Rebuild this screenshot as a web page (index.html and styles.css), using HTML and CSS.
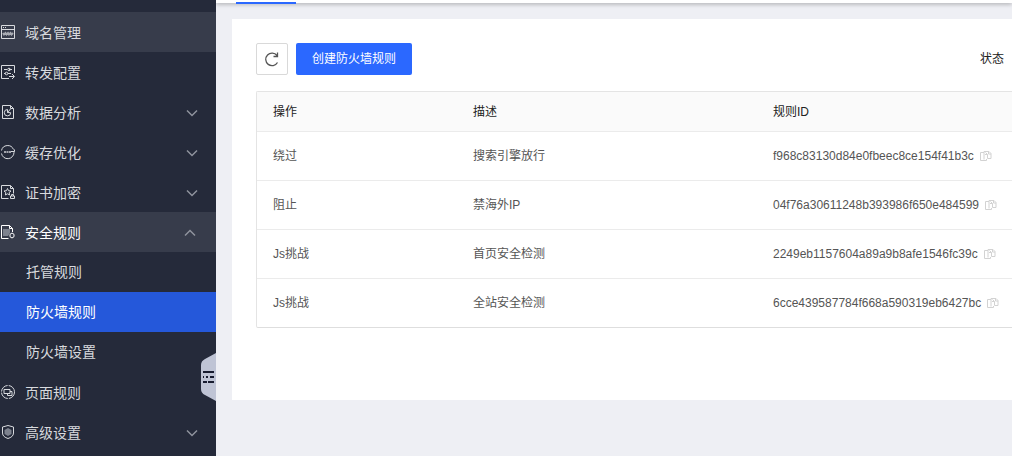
FILE: index.html
```html
<!DOCTYPE html>
<html lang="zh-CN">
<head>
  <meta charset="UTF-8">
  <meta name="viewport" content="width=device-width, initial-scale=1.0">
  <title>防火墙规则</title>
  <link rel="stylesheet" href="styles.css">
</head>
<body>
  <svg class="sprite" aria-hidden="true">
    <symbol id="arrow" viewBox="0 0 12 12"><path d="M1 3.500l5 5 5-5"/></symbol>
    <symbol id="copy" viewBox="0 0 12 12">
      <path d="M4 2.500H.500v8h6V9M4 9.500V1.500h5l2 2v5H7.500V4.500L5.500 2.500M8.500 1.500v2.500h2.500M5 4.500h2.500"/>
    </symbol>
  </svg>

  <div class="layout">
    <aside class="sidebar">
      <nav class="menu">
        <a href="#" class="menu-item highlight">
          <svg class="icon" viewBox="0 0 16 16"><path d="M1.500 1.500h13v13h-13zM1.500 5.500h13M3 3.500h1M5 3.500h1"/><path class="thick" d="M3 9l1 1.500L5.500 9l1 1.500L8 9l1 1.500L10.500 9l1 1.500L13 9"/></svg>
          <span>域名管理</span>
        </a>
        <a href="#" class="menu-item">
          <svg class="icon" viewBox="0 0 16 16"><path d="M14.500 9V1.500h-13v13H9M4 5.500h3M9 5.500h3M4 9.500h1.500M8 9.500h3M9 12.500h5M12 10l2.500 2.500L12 15"/><circle cx="9" cy="5.500" r="1.300"/><circle cx="6.500" cy="9.500" r="1.300"/></svg>
          <span>转发配置</span>
        </a>
        <a href="#" class="menu-item">
          <svg class="icon" viewBox="0 0 16 16"><path d="M2.500 1.500h8l3 3v10h-11zM10.500 1.500v3h3M7.500 8.500V5.500a3.200 3.200 0 1 0 3.200 3.200zM7.500 8.500l3-3.500"/></svg>
          <span>数据分析</span>
          <svg class="arrow"><use href="#arrow"/></svg>
        </a>
        <a href="#" class="menu-item">
          <svg class="icon" viewBox="0 0 16 16"><path d="M1.500 6.500a6.300 6.300 0 0 1 12-1M14 7.500v1A6.300 6.300 0 0 1 1.500 9.500M11 7.500h3.500v-2"/><path class="thick" d="M4 8h2M6.500 8h2M9 8h2"/></svg>
          <span>缓存优化</span>
          <svg class="arrow"><use href="#arrow"/></svg>
        </a>
        <a href="#" class="menu-item">
          <svg class="icon" viewBox="0 0 16 16"><path d="M8.500 14.500h-7v-13h9l3 3v5M10.500 1.500v3h3M7.500 4.500l1 2.200 2.500.3-1.800 1.600.4 2.400-2.100-1.200L5.400 11l.4-2.400L4 7l2.500-.3zM10.500 12h4v2.500h-4zM11.500 12v-1.500h2V12"/></svg>
          <span>证书加密</span>
          <svg class="arrow"><use href="#arrow"/></svg>
        </a>
        <a href="#" class="menu-item highlight open">
          <svg class="icon" viewBox="0 0 16 16"><path class="fill" d="M3 5h7v4l-2 3H3z"/><path d="M8.500 14.500h-7v-13h8l3 3V8M9.500 1.500v3h3M12 9l2 1.300v2.400L12 14l-2-1.300v-2.400z"/></svg>
          <span>安全规则</span>
          <svg class="arrow"><use href="#arrow"/></svg>
        </a>
        <div class="submenu">
          <a href="#">托管规则</a>
          <a href="#" class="active" aria-current="page">防火墙规则</a>
          <a href="#">防火墙设置</a>
        </div>
        <a href="#" class="menu-item">
          <svg class="icon" viewBox="0 0 16 16"><circle cx="8" cy="8" r="6.500" stroke-dasharray="9 1.200"/><path d="M4 5.500h6v4H4zM10 7.500h2v4H7.500v-2"/></svg>
          <span>页面规则</span>
        </a>
        <a href="#" class="menu-item">
          <svg class="icon" viewBox="0 0 16 16"><path d="M8 1.500l5.500 1.500v6c0 3-2.500 4.500-5.500 5.500C5 13.500 2.500 12 2.500 9V3z"/><path class="fill" d="M8 4l3.500 2v4L8 12l-3.500-2V6z"/></svg>
          <span>高级设置</span>
          <svg class="arrow"><use href="#arrow"/></svg>
        </a>
      </nav>
      <button class="collapse" aria-label="收起菜单">
        <svg viewBox="0 0 15 48"><path class="shape" d="M15 0L4 6Q0 8 0 12v24q0 4 4 6l11 6z"/><path class="bars" d="M2 19h11M2 24h1M5 24h2M9 24h4M2 29h4M7 29h6"/></svg>
      </button>
    </aside>

    <div class="content">
      <header class="tabs"><span class="tab-line"></span></header>
      <main class="panel">
        <div class="toolbar">
          <button class="btn-refresh" aria-label="刷新">
            <svg viewBox="0 0 16 16"><path d="M13 4.500A6.300 6.300 0 1 0 13.500 11.500M13.500 1.500v4h-4"/></svg>
          </button>
          <button class="btn-primary">创建防火墙规则</button>
          <span class="status">状态</span>
        </div>
        <table class="rules">
          <thead>
            <tr><th class="col-action">操作</th><th class="col-desc">描述</th><th>规则ID</th></tr>
          </thead>
          <tbody>
            <tr>
              <td>绕过</td>
              <td>搜索引擎放行</td>
              <td><div class="rule-id">f968c83130d84e0fbeec8ce154f41b3c<button class="copy" aria-label="复制"><svg><use href="#copy"/></svg></button></div></td>
            </tr>
            <tr>
              <td>阻止</td>
              <td>禁海外IP</td>
              <td><div class="rule-id">04f76a30611248b393986f650e484599<button class="copy" aria-label="复制"><svg><use href="#copy"/></svg></button></div></td>
            </tr>
            <tr>
              <td>Js挑战</td>
              <td>首页安全检测</td>
              <td><div class="rule-id">2249eb1157604a89a9b8afe1546fc39c<button class="copy" aria-label="复制"><svg><use href="#copy"/></svg></button></div></td>
            </tr>
            <tr>
              <td>Js挑战</td>
              <td>全站安全检测</td>
              <td><div class="rule-id">6cce439587784f668a590319eb6427bc<button class="copy" aria-label="复制"><svg><use href="#copy"/></svg></button></div></td>
            </tr>
          </tbody>
        </table>
      </main>
    </div>
  </div>
</body>
</html>
```
FILE: styles.css
```css
* {
  margin: 0;
  padding: 0;
  box-sizing: border-box;
}

body {
  font-family: "Liberation Sans", "Noto Sans CJK SC", sans-serif;
  font-size: 12px;
  line-height: 20px;
  color: #555;
  background: #eeeff4;
}

button {
  font: inherit;
  border: none;
  background: none;
  cursor: pointer;
}

a {
  color: inherit;
  text-decoration: none;
}

svg {
  fill: none;
  stroke: currentColor;
}

.sprite {
  position: absolute;
  width: 0;
  height: 0;
}

.layout {
  display: flex;
  min-height: 100vh;
}

/* Sidebar */
.sidebar {
  position: relative;
  flex: 0 0 216px;
  padding-top: 12px;
  background: #252a3a;
  color: #d8dade;
  font-size: 14px;
}

.menu-item {
  display: flex;
  align-items: center;
  height: 40px;
  padding-top: 2px;
  padding-right: 18px;
}

.menu-item.highlight {
  background: #373c4b;
}

.menu-item.open {
  color: #fff;
  padding-right: 20px;
}

.icon {
  width: 16px;
  height: 16px;
  margin: 0 9px 2px 0;
}

.icon .fill {
  fill: #7d828e;
  stroke: none;
}

.icon .thick {
  stroke-width: 2;
  opacity: 0.7;
}

.arrow {
  width: 12px;
  height: 12px;
  margin-left: auto;
  color: #8f939d;
  stroke-width: 1.5;
}

.open .arrow {
  transform: rotate(180deg);
}

.submenu a {
  display: block;
  padding: 10px 26px;
}

.submenu .active {
  background: #2558da;
  color: #fff;
}

.collapse {
  position: absolute;
  right: 0;
  top: 353px;
  width: 15px;
  height: 48px;
}

.collapse svg {
  display: block;
  width: 15px;
  height: 48px;
}

.collapse .shape {
  fill: #bfc4d5;
  stroke: none;
}

.collapse .bars {
  stroke: #181c30;
  stroke-width: 2;
}

/* Content */
.content {
  flex: 1;
  min-width: 0;
}

.tabs {
  height: 3px;
  padding-left: 20px;
  background: #fff;
  box-shadow: 0 1px 4px rgba(0, 0, 0, 0.35);
}

.tab-line {
  display: block;
  width: 60px;
  height: 4px;
  border-bottom: 2px solid #2b68ff;
}

.panel {
  min-height: 381px;
  margin: 16px 0 0 16px;
  padding: 24px 0 72px 24px;
  background: #fff;
}

.toolbar {
  display: flex;
  align-items: center;
  gap: 8px;
  margin-bottom: 16px;
  padding-right: 8px;
}

.btn-refresh {
  display: flex;
  align-items: center;
  justify-content: center;
  width: 32px;
  height: 32px;
  border: 1px solid #d9d9d9;
  border-radius: 2px;
  color: #555;
}

.btn-refresh svg {
  width: 16px;
  height: 16px;
  stroke-width: 1.3;
}

.btn-primary {
  height: 32px;
  padding: 0 16px;
  border-radius: 2px;
  background: #2b68ff;
  color: #fff;
}

.status {
  margin-left: auto;
  color: #222;
}

.rules {
  width: 100%;
  table-layout: fixed;
  border-spacing: 0;
  border: 1px solid #e4e4e4;
  border-right: none;
  border-bottom-color: #dedede;
  border-radius: 2px 0 0 2px;
}

.rules th,
.rules td {
  padding: 0 16px;
  text-align: left;
  border-bottom: 1px solid #ebebeb;
}

.rules th {
  height: 40px;
  background: #fafafa;
  color: #222;
  font-weight: normal;
}

.rules td {
  height: 49px;
}

.rules tbody tr:last-child td {
  height: 48px;
  border-bottom: none;
}

.col-action {
  width: 200px;
}

.col-desc {
  width: 300px;
}

.rule-id {
  display: flex;
  align-items: center;
  gap: 6px;
}

.copy {
  flex: none;
  width: 12px;
  height: 12px;
  color: #d2d2d2;
}

.copy svg {
  display: block;
  width: 12px;
  height: 12px;
}
```
